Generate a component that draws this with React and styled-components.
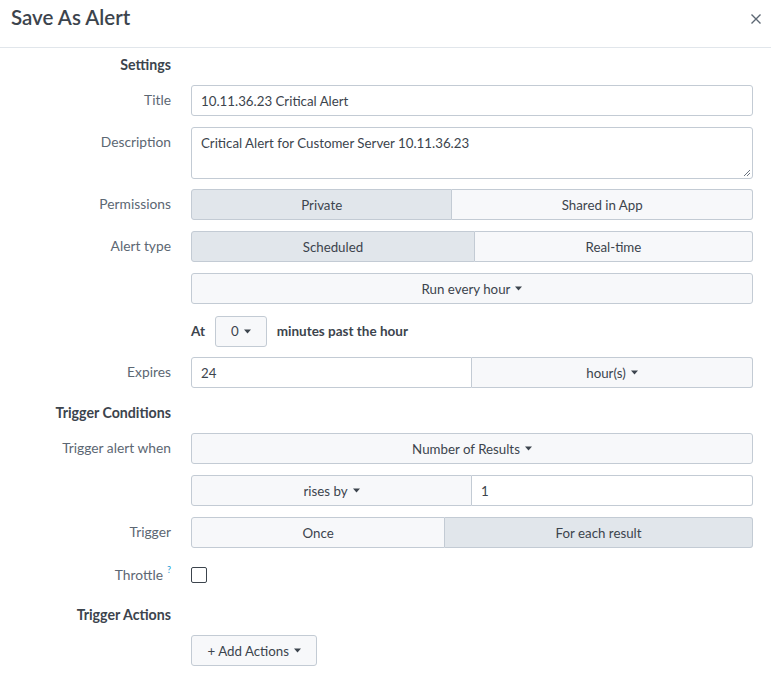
import React from "react";
import styled, { createGlobalStyle } from "styled-components";

const Global = createGlobalStyle`
  html, body { margin: 0; padding: 0; background: #fff; }
  body { font-family: Lato, "Liberation Sans", sans-serif; color: #3c444d; }
  * { box-sizing: border-box; }
`;

const Dialog = styled.div`
  width: 771px;
  height: 681px;
  background: #fff;
  overflow: hidden;
`;

const Header = styled.div`
  height: 48px;
  border-bottom: 1px solid #e1e6eb;
  display: flex;
  align-items: flex-start;
  justify-content: space-between;
  padding: 5px 9px 0 11px;
`;

const Title = styled.h1`
  margin: 0;
  font-size: 20.5px;
  font-weight: 600;
  color: #3c444d;
  line-height: 24px;
`;

const Close = styled.button`
  border: 0;
  background: none;
  padding: 0;
  margin-top: 8px;
  width: 12px;
  height: 12px;
  display: flex;
  cursor: pointer;
`;

const Body = styled.div`
  padding: 3px 18px 0 0;
  display: flex;
  flex-direction: column;
  gap: 10px;
`;

const Row = styled.div`
  display: grid;
  grid-template-columns: 171px 1fr;
  column-gap: 20px;
  align-items: ${(p) => (p.$center ? "center" : "start")};
  min-height: ${(p) => (p.$heading ? "24px" : "32px")};
`;

const Label = styled.div`
  text-align: right;
  font-size: ${(p) => (p.$heading ? "14.2px" : "13.8px")};
  line-height: 20px;
  padding-top: ${(p) => (p.$heading ? "4px" : "5px")};
  font-weight: ${(p) => (p.$heading ? 700 : 400)};
  color: ${(p) => (p.$heading ? "#3c444d" : "#5c6773")};
  white-space: nowrap;
`;

const Help = styled.sup`
  color: #1a9cd6;
  font-size: 9px;
  margin-left: 4px;
  vertical-align: 7px;
  line-height: 0;
`;

const Input = styled.div`
  height: ${(p) => (p.$tall ? "52px" : "31px")};
  border: 1px solid #c3cbd4;
  border-radius: 3px;
  background: #fff;
  font-size: 13.3px;
  line-height: 20px;
  padding: 5px 9px;
  color: #3c444d;
  min-width: 0;
  position: relative;
  ${(p) => p.$left && "border-top-right-radius: 0; border-bottom-right-radius: 0;"}
  ${(p) => p.$right && "border-top-left-radius: 0; border-bottom-left-radius: 0; border-left: 0;"}
`;

const Grip = styled.svg`
  position: absolute;
  right: 1px;
  bottom: 1px;
`;

const Group = styled.div`
  display: flex;
  height: 31px;
`;

const Halves = styled.div`
  display: grid;
  grid-template-columns: 1fr 1fr;
  height: 31px;
`;

const Btn = styled.button`
  font-family: inherit;
  height: 31px;
  flex: ${(p) => (p.$grow ? "1 1 auto" : p.$equal ? "1 1 0" : "0 0 auto")};
  border: 1px solid #c3cbd4;
  background: ${(p) => (p.$active ? "#e1e6eb" : "#f7f8fa")};
  color: #3c444d;
  font-size: 13.3px;
  padding: 0 ${(p) => (p.$pad ? p.$pad : "14px")};
  border-radius: 3px;
  display: flex;
  align-items: center;
  justify-content: center;
  gap: 5px;
  white-space: nowrap;
  min-width: 0;
  & + & {
    border-left: 0;
  }
  ${(p) => p.$first && "border-top-right-radius: 0; border-bottom-right-radius: 0;"}
  ${(p) => p.$last && "border-top-left-radius: 0; border-bottom-left-radius: 0; border-left: 0;"}
`;

const Caret = () => (
  <svg width="7" height="5" viewBox="0 0 7 5">
    <path d="M0 0.5h7L3.5 4.5z" fill="#3c444d" />
  </svg>
);

const AtLine = styled.div`
  display: flex;
  align-items: center;
  gap: 10px;
  font-size: 13.5px;
  font-weight: 700;
  color: #3c444d;
`;

const Check = styled.span`
  display: block;
  width: 16px;
  height: 16px;
  border: 1.5px solid #3c444d;
  border-radius: 2px;
  background: #fff;
`;

const Spacer = styled.div``;

export default function App() {
  return (
    <>
      <Global />
      <Dialog>
        <Header>
          <Title>Save As Alert</Title>
          <Close aria-label="Close">
            <svg width="12" height="12" viewBox="0 0 12 12">
              <path d="M1.5 1.5L10.5 10.5M10.5 1.5L1.5 10.5" stroke="#5c6773" strokeWidth="1.4" />
            </svg>
          </Close>
        </Header>
        <Body>
          <Row $heading>
            <Label $heading>Settings</Label>
            <Spacer />
          </Row>
          <Row>
            <Label>Title</Label>
            <Input>10.11.36.23 Critical Alert</Input>
          </Row>
          <Row>
            <Label>Description</Label>
            <Input $tall>
              Critical Alert for Customer Server 10.11.36.23
              <Grip width="8" height="8" viewBox="0 0 8 8">
                <path d="M7 1L1 7M7 4L4 7" stroke="#6b7480" strokeWidth="1" />
              </Grip>
            </Input>
          </Row>
          <Row>
            <Label>Permissions</Label>
            <Group>
              <Btn $grow $first $active>Private</Btn>
              <Btn $grow $last>Shared in App</Btn>
            </Group>
          </Row>
          <Row>
            <Label>Alert type</Label>
            <Group>
              <Btn $grow $first $active>Scheduled</Btn>
              <Btn $grow $last>Real-time</Btn>
            </Group>
          </Row>
          <Row>
            <Spacer />
            <Group>
              <Btn $equal>Run every hour <Caret /></Btn>
            </Group>
          </Row>
          <Row $center>
            <Spacer />
            <AtLine>
              At
              <Btn $pad="15px">0 <Caret /></Btn>
              minutes past the hour
            </AtLine>
          </Row>
          <Row>
            <Label>Expires</Label>
            <Halves>
              <Input $left>24</Input>
              <Btn $last>hour(s) <Caret /></Btn>
            </Halves>
          </Row>
          <Row $heading>
            <Label $heading>Trigger Conditions</Label>
            <Spacer />
          </Row>
          <Row>
            <Label>Trigger alert when</Label>
            <Group>
              <Btn $equal>Number of Results <Caret /></Btn>
            </Group>
          </Row>
          <Row>
            <Spacer />
            <Halves>
              <Btn $first>rises by <Caret /></Btn>
              <Input $right>1</Input>
            </Halves>
          </Row>
          <Row>
            <Label>Trigger</Label>
            <Group>
              <Btn $grow $first>Once</Btn>
              <Btn $grow $last $active>For each result</Btn>
            </Group>
          </Row>
          <Row $center>
            <Label style={{ paddingTop: 0 }}>
              Throttle<Help>?</Help>
            </Label>
            <Check />
          </Row>
          <Row $heading>
            <Label $heading>Trigger Actions</Label>
            <Spacer />
          </Row>
          <Row>
            <Spacer />
            <Group>
              <Btn $pad="15.5px">+ Add Actions <Caret /></Btn>
            </Group>
          </Row>
        </Body>
      </Dialog>
    </>
  );
}
